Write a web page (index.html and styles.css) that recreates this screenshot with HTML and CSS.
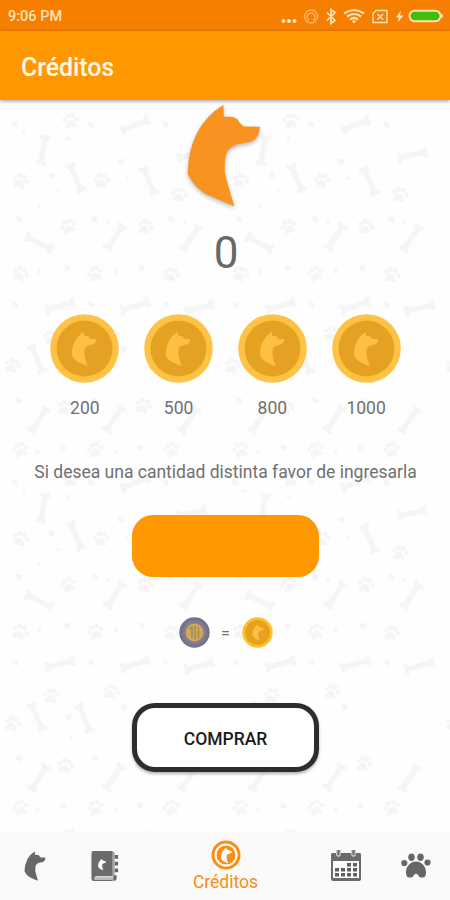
FILE: index.html
```html
<!DOCTYPE html>
<html lang="es">
<head>
<meta charset="utf-8">
<title>Créditos</title>
<link rel="stylesheet" href="styles.css">
</head>
<body>
<svg class="defs" width="0" height="0">
  <defs>
    <symbol id="dog" viewBox="80 28 220 308"><path d="M189 30 L190 66 Q216 63 229 72 Q238 88 250 95 L298 96 Q297 123 280 136 Q266 144 244 146 Q213 151 201 169 Q191 187 193 230 Q198 259 222 334 Q182 317 136 297 Q98 273 82 236 Q85 95 189 30Z"/></symbol>
    <symbol id="coin" viewBox="0 0 69 69"><circle cx="34.500" cy="34.500" r="34.300" fill="#fec344"/><circle cx="34.500" cy="34.500" r="28" fill="#e4a122"/><use href="#dog" x="21.500" y="17.500" width="25" height="35" fill="#fec044"/></symbol>
    <g id="bone"><path d="M-10 -2.800 L10 -2.800 L13 -6 L16 -4 L14.500 0 L16 4 L13 6 L10 2.800 L-10 2.800 L-13 6 L-16 4 L-14.500 0 L-16 -4 L-13 -6Z"/></g>
    <g id="paw"><path d="M-5 6 Q-6 2 -1 -1 Q3 -2 6 4 Q6 7 3 6 Q0 5 -2 7 Q-4 8 -5 6Z"/><circle cx="-6" cy="-1" r="2.200"/><circle cx="-2.500" cy="-5" r="2.500"/><circle cx="2.500" cy="-5.500" r="2.400"/><circle cx="6.500" cy="-2" r="2.200"/></g>
    <pattern id="pets" width="220.500" height="358" patternUnits="userSpaceOnUse">
      <g fill="#f5f5f5">
        <use href="#bone" transform="translate(135 25) rotate(-22)"/><use href="#bone" transform="translate(43 50) rotate(100)"/>
        <use href="#bone" transform="translate(76 78) rotate(66)"/><use href="#bone" transform="translate(149 81) rotate(66)"/>
        <use href="#bone" transform="translate(192 55) rotate(-12)"/><use href="#bone" transform="translate(39 143) rotate(27)"/>
        <use href="#bone" transform="translate(115 137) rotate(-56)"/><use href="#bone" transform="translate(191 138) rotate(-56)"/>
        <use href="#bone" transform="translate(60 206) rotate(-15)"/><use href="#bone" transform="translate(135 206) rotate(-17)"/>
        <use href="#bone" transform="translate(199 208) rotate(-15)"/><use href="#bone" transform="translate(37 259) rotate(66)"/>
        <use href="#bone" transform="translate(84 260) rotate(66)"/><use href="#bone" transform="translate(39 320) rotate(-56)"/>
        <use href="#bone" transform="translate(114 319) rotate(-56)"/><use href="#bone" transform="translate(189 320) rotate(-56)"/>
        <use href="#paw" transform="translate(70 21)"/><use href="#paw" transform="translate(20 81) rotate(20)"/>
        <use href="#paw" transform="translate(101 81) rotate(10)"/><use href="#paw" transform="translate(179 95) rotate(15)"/>
        <use href="#paw" transform="translate(68 127) rotate(-15)"/><use href="#paw" transform="translate(145 127) rotate(20)"/>
        <use href="#paw" transform="translate(20 174) rotate(25)"/><use href="#paw" transform="translate(95 174) rotate(-12)"/>
        <use href="#paw" transform="translate(171 175) rotate(20)"/><use href="#paw" transform="translate(51 238) rotate(10)"/>
        <use href="#paw" transform="translate(111 234) rotate(20)"/><use href="#paw" transform="translate(12 266) rotate(20)"/>
        <use href="#paw" transform="translate(65 308) rotate(20)"/><use href="#paw" transform="translate(143 306) rotate(20)"/>
        <use href="#paw" transform="translate(20 350) rotate(-8)"/><use href="#paw" transform="translate(95 350) rotate(-8)"/><use href="#paw" transform="translate(171 350) rotate(-8)"/>
        <path d="M12 21l6 2l-1 5l-5-2zM88 21l6 2l-1 5l-5-2zM163 21l6 2l-1 5l-5-2zM49 73l5 0l0 5l-5 1zM118 59l6 0l0 5l-5 1zM16 116l6 1l-1 6l-5-3zM92 116l6 1l-1 6l-5-2zM168 116l6 1l-1 6l-5-2zM64 165l5 0l1 5l-5 1zM139 165l5 0l1 5l-5 1zM12 201l6 2l0 5l-5-2zM88 201l6 2l0 5l-5-2zM163 201l6 2l0 5l-5-2zM66 257l5 0l0 5l-5-1zM121 246l5 0l1 5l-5 2zM16 297l6 2l-1 5l-5-2zM92 297l6 2l-1 5l-5-2zM60 345l5 0l1 5l-5 1zM137 345l5 0l1 5l-5 1zM22 31l4 1l-1 3l-3-1zM66 37l4 0l-1 4l-3-1zM98 31l2 3l-2 1zM57 90l3 0l0 3l-3 0zM126 77l3 0l0 3l-3 0zM38 105l3 0l0 3l-3 0zM106 121l3 0l0 3l-3 0zM183 121l3 0l0 3l-3 0zM38 169l3 0l0 5l-3 0zM114 169l3 0l0 5l-3 0zM70 277l3 0l0 4l-3 0zM114 350l3 0l0 3l-3 0zM36 350l3 0l0 3l-3 0z"/>
      </g>
    </pattern>
  </defs>
</svg>
<div class="screen">
  <header class="status">
    <span class="time">9:06 PM</span>
    <svg class="status-icons" width="165" height="24" viewBox="0 0 165 24" fill="none" stroke="#ffe0bb">
      <g fill="#ffe6c8" stroke="none"><circle cx="4.500" cy="16" r="2"/><circle cx="10" cy="16" r="2"/><circle cx="15.500" cy="16" r="2"/></g>
      <g stroke="#ffb66b" stroke-width="1.300"><circle cx="32" cy="11.500" r="6.500"/><path d="M30 15.500a4 4 0 1 1 4 0"/></g>
      <path d="M48 7.500l8 8l-4 3v-14l4 3l-8 8" stroke-width="1.700"/>
      <g stroke-width="2.200"><path d="M65 8.500q10-7 20 0M68 11.500q7-5 14 0M71 14.500q4-3 8 0"/><path d="M73.500 16h3l-1.500 2z" fill="#ffe0bb" stroke-width="1"/></g>
      <path d="M97 5.500h11v12h-14v-9zM98.500 9l5.500 5.500M104 9l-5.500 5.500" stroke-width="1.500"/>
      <path d="M122 5.500l-5 7h3l-1.500 5l6-7h-3.500z" fill="#ffe9d0" stroke="none"/>
      <rect x="130.500" y="5.800" width="31" height="10.500" rx="5.200" fill="#43bd09" stroke="#ffdfae" stroke-width="2"/><path d="M163 9v4" stroke-width="1.500"/>
    </svg>
  </header>
  <div class="toolbar"><h1>Créditos</h1></div>
  <main class="content">
    <svg class="backdrop" width="450" height="732"><rect width="450" height="732" fill="url(#pets)"/></svg>
    <svg class="logo" width="73.500" height="103"><use href="#dog" fill="#f7931e"/></svg>
    <div class="balance">0</div>
    <div class="packs">
      <div class="pack"><svg class="coin"><use href="#coin"/></svg><span>200</span></div>
      <div class="pack"><svg class="coin"><use href="#coin"/></svg><span>500</span></div>
      <div class="pack"><svg class="coin"><use href="#coin"/></svg><span>800</span></div>
      <div class="pack"><svg class="coin"><use href="#coin"/></svg><span>1000</span></div>
    </div>
    <p class="hint">Si desea una cantidad distinta favor de ingresarla</p>
    <div class="amount"></div>
    <div class="rate">
      <svg width="31" height="31" viewBox="0 0 31 31"><circle cx="15.500" cy="15.500" r="15.200" fill="#74728a"/><circle cx="15.500" cy="15.500" r="12" fill="#807e90"/><circle cx="15.500" cy="15.500" r="9" fill="#cda958"/><path d="M10 12l3-2v11M16 8.500v14M19.500 10v11" stroke="#a48b5d" stroke-width="1.500" fill="none"/></svg>
      <span>=</span>
      <svg width="31" height="31" viewBox="0 0 31 31"><circle cx="15.500" cy="15.500" r="15.200" fill="#ffc02e"/><circle cx="15.500" cy="15.500" r="12.500" fill="#e8a11b"/><use href="#dog" x="10" y="7.500" width="12" height="16" fill="#fec044"/></svg>
    </div>
    <button class="buy">COMPRAR</button>
  </main>
  <nav class="tabs">
    <div class="tab"><svg width="22" height="30"><use href="#dog" fill="#686868"/></svg></div>
    <div class="tab"><svg width="28" height="31" viewBox="0 0 28 32"><path d="M2 0H22V26H5Q3 26 3 28H22V31H3Q0 31 0 28V2Q0 0 2 0Z" fill="#6b6b6b"/><path d="M3 27H22V30H3Z" fill="#bbb"/><path d="M22 1V30h2v-29" fill="#a8a8a8"/><path d="M24 4h3.500v4H24zM24 11h3.500v4H24zM24 18h3.500v4H24zM23 25h3v4l-2 2h-1z" fill="#686868"/><use href="#dog" x="6.500" y="8" width="9" height="12" fill="#fff"/></svg></div>
    <div class="tab active"><svg width="30" height="30" viewBox="0 0 30 30"><circle cx="15" cy="15" r="13" fill="#fff" stroke="#fb8c16" stroke-width="3"/><circle cx="15" cy="15" r="9.500" fill="#fb8c16"/><use href="#dog" x="9.500" y="7.500" width="12" height="16" fill="#fff"/></svg><span>Créditos</span></div>
    <div class="tab"><svg width="32" height="32" viewBox="0 0 32 32"><path d="M2 3H30Q31 3 31 5V29Q31 31 29 31H3Q1 31 1 29V5Q1 3 2 3Z" fill="#6b6b6b"/><path d="M3 11H29V28H3Z" fill="#fff"/><path d="M6 0h5v5q-2.500 4-5 0zM21 0h5v5q-2.500 4-5 0z" fill="#c4c4c4"/><path d="M7.500 0h2v5h-2zM22.500 0h2v5h-2z" fill="#686868"/><path d="M17 13h4v3.500h-4zM23 13h4v3.500h-4zM5 18h4v3.500H5zM11 18h4v3.500h-4zM17 18h4v3.500h-4zM23 18h4v3.500h-4zM5 23h4v3.500H5zM11 23h4v3.500h-4zM17 23h4v3.500h-4zM23 23h4v3.500h-4z" fill="#5f5f5f"/></svg></div>
    <div class="tab"><svg width="30" height="26" viewBox="0 0 30 26" fill="#666"><circle cx="3.300" cy="10" r="3.100"/><ellipse cx="10.500" cy="4.300" rx="3.200" ry="3.700"/><ellipse cx="19.500" cy="4.300" rx="3.200" ry="3.700"/><circle cx="26.500" cy="9.500" r="3.100"/><path d="M15 8.500C20 8.500 25 13 25 19C25 24 23 25 20 24.500Q18 24 17 22Q15 19.500 13 22Q12 24 10 24.500C7 25 5 24 5 19C5 13 10 8.500 15 8.500Z"/></svg></div>
  </nav>
</div>
</body>
</html>
```
FILE: styles.css
```css
* { box-sizing: border-box; }
body { margin: 0; font-family: Roboto, "Liberation Sans", sans-serif; background: #fefefe; }
svg { display: block; }
.defs { position: absolute; }
.screen { width: 450px; height: 900px; display: flex; flex-direction: column; overflow: hidden; }
.status { height: 31px; flex: none; background: #f77f00; display: flex; align-items: center; justify-content: space-between; padding: 0 6px 0 8px; }
.time { color: #ffe0bb; font-size: 14.5px; font-weight: 500; line-height: 31px; margin-top: 2px; }
.status-icons { margin-top: 2px; }
.toolbar { height: 69px; flex: none; background: #ff9800; padding: 0 21px; display: flex; align-items: center; box-shadow: 0 1px 4px rgba(0, 0, 0, .4); z-index: 1; }
h1 { margin: 5px 0 0; color: #fff8e9; font-size: 25px; line-height: 30px; font-weight: 500; letter-spacing: -.1px; }
.content { height: 732px; flex: none; position: relative; display: flex; flex-direction: column; align-items: center; padding-top: 4px; color: #707070; font-size: 17.5px; isolation: isolate; }
.backdrop { position: absolute; inset: 0; z-index: -1; }
.logo { filter: drop-shadow(0 2px 2px rgba(0, 0, 0, .28)); margin-right: 3px; overflow: visible; }
.balance { margin-top: 20px; font-size: 44px; line-height: 52px; color: #686868; margin-left: 2px; }
.packs { margin: 35px 0 0 1px; width: 375px; display: grid; grid-template-columns: repeat(4, 1fr); }
.pack { display: flex; flex-direction: column; align-items: center; gap: 15px; line-height: 21px; }
.coin { width: 69px; height: 69px; }
.hint { margin: 43px 0 0 1px; line-height: 21px; white-space: nowrap; }
.amount { margin-top: 32px; width: 187px; height: 62px; border-radius: 21px; background: #ff9800; }
.rate { margin-top: 40px; display: flex; align-items: center; gap: 11px; margin-left: 1px; }
.rate span { width: 10px; text-align: center; font-size: 16px; padding-top: 2px; }
.buy { margin-top: 55px; width: 187px; height: 69px; border: 5.5px solid #2d2d2d; border-radius: 23px; background: #fff; color: #1b1b1b; font: 500 17.5px/21px Roboto, sans-serif; box-shadow: 0 2px 3px rgba(0, 0, 0, .3); padding: 3px 0 0 1px; }
.tabs { flex: none; height: 68px; background: #fafafa; display: grid; grid-template-columns: 70px 70px 171px 70px 69px; align-items: center; }
.tab { display: flex; flex-direction: column; align-items: center; }
.active { color: #fb8c16; font-size: 17.5px; gap: 2px; line-height: 20px; }
```
